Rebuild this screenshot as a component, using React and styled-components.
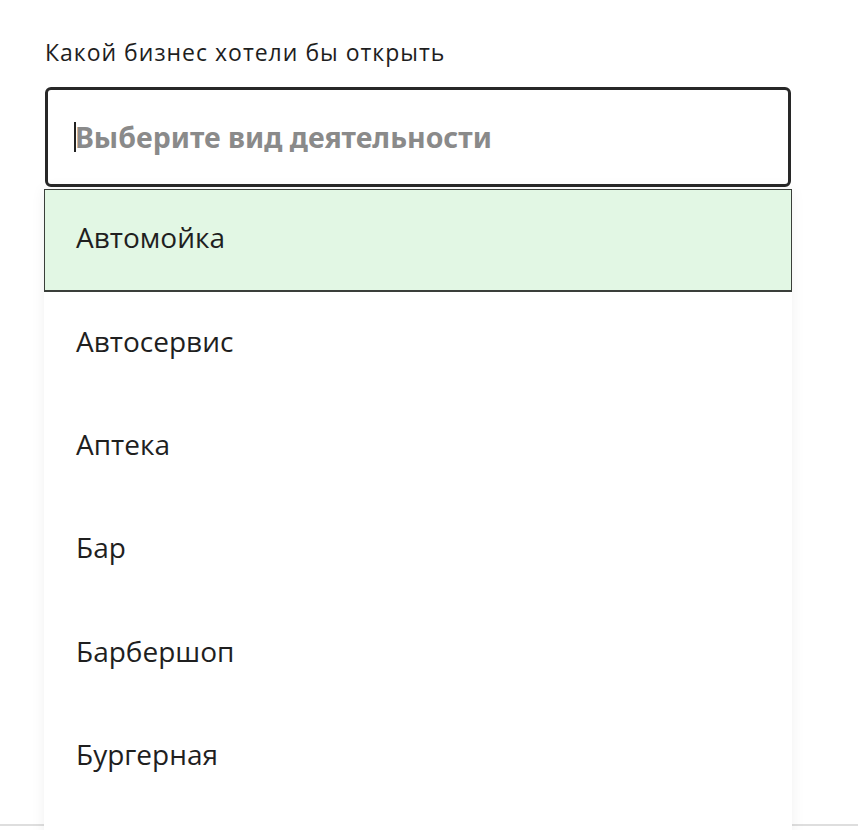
import React, { useState } from 'react'
import styled, { createGlobalStyle } from 'styled-components'

const GlobalStyle = createGlobalStyle`
    html, body {
        margin: 0;
        padding: 0;
        background: #ffffff;
        font-family: "Open Sans", "Noto Sans", sans-serif;
        color: #1f1f1f;
    }
`

const options = [
    'Автомойка',
    'Автосервис',
    'Аптека',
    'Бар',
    'Барбершоп',
    'Бургерная',
]

const Page = styled.div`
    height: 830px;
    overflow: hidden;
    position: relative;
`

const Section = styled.section`
    padding: 36px 0 0 45px;
    height: 788px;
    border-bottom: 2px solid #dedede;
`

const Field = styled.div`
    position: relative;
    width: 746px;
`

const Label = styled.label`
    display: block;
    font-size: 23px;
    letter-spacing: 1px;
    line-height: 32px;
    color: #1e1e1e;
    margin-bottom: 19px;
`

const InputBox = styled.div`
    box-sizing: border-box;
    height: 100px;
    border: 3px solid #282828;
    border-radius: 6px;
    display: flex;
    align-items: center;
    padding-left: 26px;
`

const Caret = styled.span`
    width: 2px;
    height: 30px;
    background: #222;
    margin-right: -1px;
`

const Placeholder = styled.span`
    font-family: "Noto Sans", "Open Sans", sans-serif;
    font-weight: 700;
    font-size: 28.5px;
    color: #8a8a8a;
`

const Menu = styled.ul`
    position: absolute;
    top: calc(100% + 2px);
    left: -1px;
    width: 748px;
    margin: 0;
    padding: 0 0 80px;
    list-style: none;
    background: #ffffff;
    box-shadow: 0 0 14px rgba(0, 0, 0, 0.06);
`

const Item = styled.li`
    box-sizing: border-box;
    height: 103.4px;
    display: flex;
    align-items: center;
    padding: 0 0 7px 31px;
    font-size: 28px;
    color: #1f1f1f;
    background: ${(props) => (props.active ? '#e2f7e4' : '#ffffff')};
    border: 1px solid ${(props) => (props.active ? '#3a3f3a' : 'transparent')};
    border-width: ${(props) => (props.active ? '1px 1px 2px 1px' : '1px')};
`

export default function App() {
    const [active] = useState(0)

    return (
        <>
            <GlobalStyle />
            <Page>
                <Section>
                    <Field>
                        <Label>Какой бизнес хотели бы открыть</Label>
                        <InputBox>
                            <Caret />
                            <Placeholder>Выберите вид деятельности</Placeholder>
                        </InputBox>
                        <Menu>
                            {options.map((option, index) => (
                                <Item key={option} active={index === active}>
                                    {option}
                                </Item>
                            ))}
                        </Menu>
                    </Field>
                </Section>
            </Page>
        </>
    )
}
